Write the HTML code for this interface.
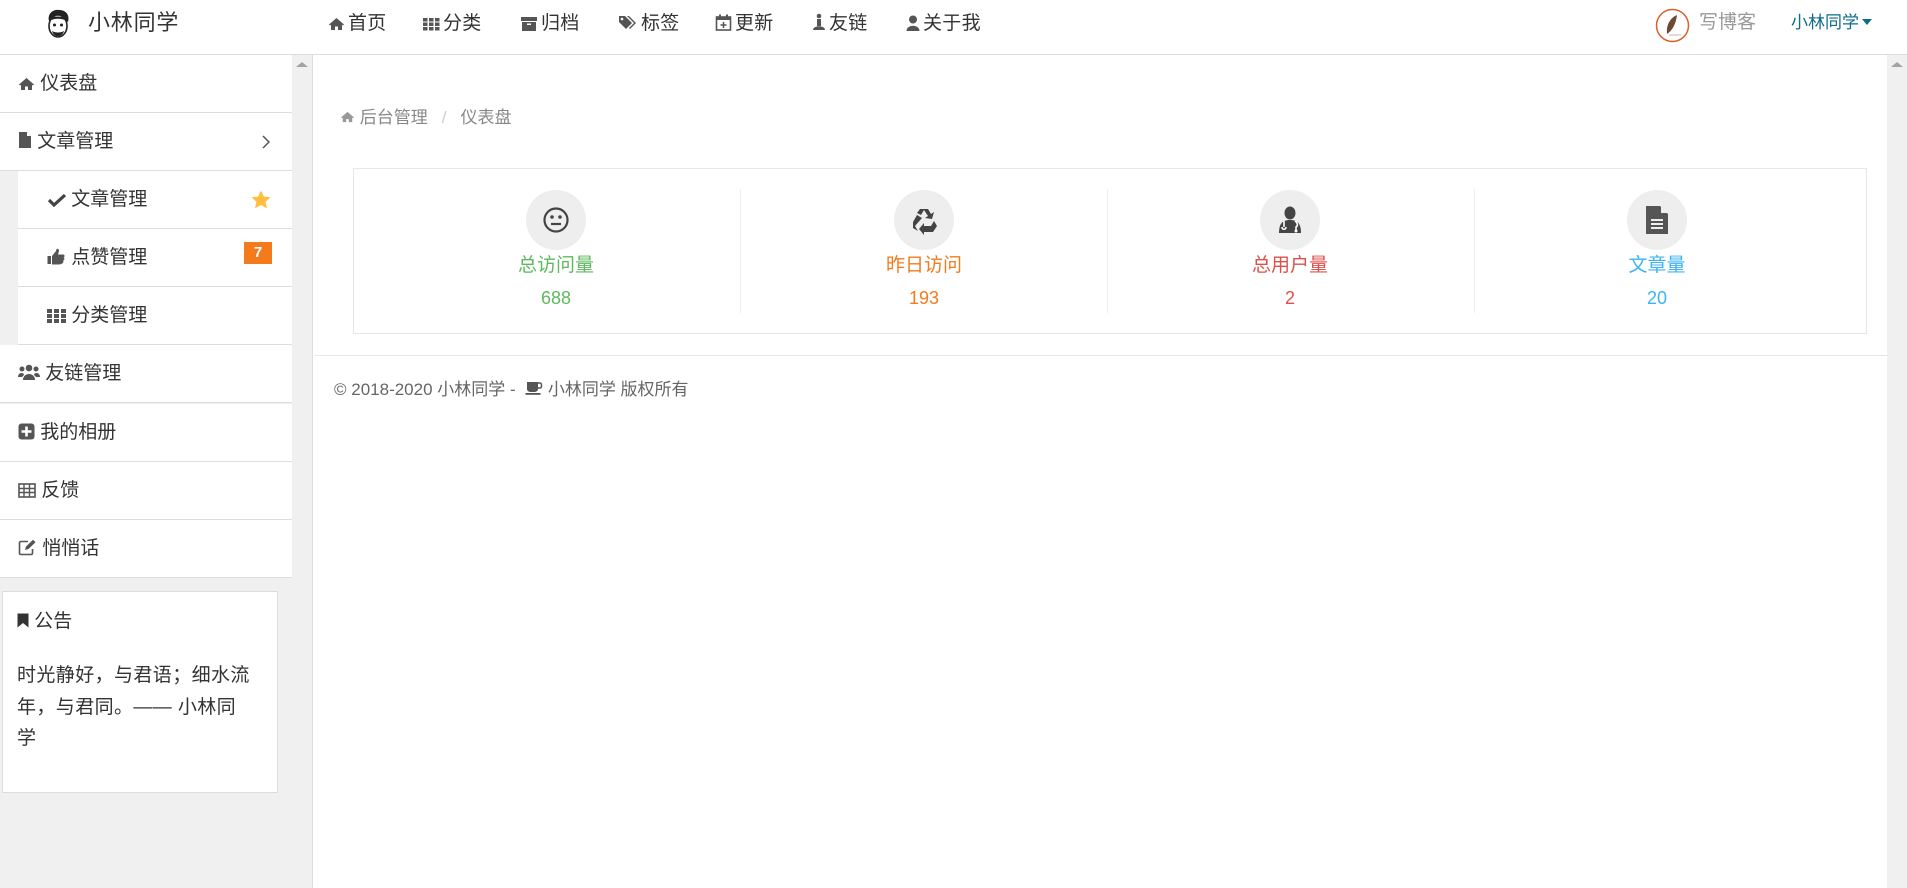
<!DOCTYPE html>
<html><head><meta charset="utf-8">
<style>
*{margin:0;padding:0;box-sizing:border-box}
body{width:1907px;height:888px;overflow:hidden;background:#fff;font-family:"Liberation Sans","Noto Sans CJK SC",sans-serif;color:#333;position:relative}
.abs{position:absolute}
.hdr{left:0;top:0;width:1907px;height:55px;border-bottom:1px solid #ddd;background:#fff}
.nav{top:1px;height:45px;line-height:45px;font-size:19px;color:#333;white-space:nowrap;letter-spacing:0.3px}
.nav svg{vertical-align:-2px;margin-right:3px}
.side{left:0;top:55px;width:292px;height:833px;background:#f0f0f0}
.item{position:absolute;left:0;width:292px;height:58px;background:#fff;border-bottom:1px solid #ddd;font-size:19px;line-height:57px;color:#333;white-space:nowrap}
.item svg{vertical-align:-2px}
.sb{left:292px;top:55px;width:21px;height:833px;background:#f0f0f0;border-right:1px solid #ddd}
.sb2{left:1887px;top:55px;width:20px;height:833px;background:#f0f0f0}
.stat{position:absolute;top:0;width:378px;text-align:center}
.circ{width:60px;height:60px;border-radius:50%;background:#eee;margin:21px auto 0;display:flex;align-items:center;justify-content:center}
.lbl{font-size:19px;margin-top:4px;line-height:24px}
.num{font-size:18px;margin-top:9px;line-height:22px}
</style></head><body>
<div class="abs hdr"></div>
<svg class="abs" style="left:44px;top:9px" width="28" height="30" viewBox="0 0 28 30">
<path d="M5 12 C3 4 10 0 15 1 C22 1 26 6 24 13 L22 12 L6 12Z" fill="#222"/>
<ellipse cx="14" cy="17" rx="9" ry="11" fill="#fff" stroke="#222" stroke-width="1.6"/>
<path d="M5 12 C6 6 22 6 23 12 C18 9 10 9 5 12Z" fill="#222"/>
<circle cx="10.5" cy="16" r="1.5" fill="#222"/><circle cx="17.5" cy="16" r="1.5" fill="#222"/>
<path d="M8 22 C10 29 18 29 20 22 C17 24 11 24 8 22Z" fill="#222"/>
</svg>
<div class="abs" style="left:88px;top:8px;font-size:22px;line-height:30px;color:#333;letter-spacing:0.8px">小林同学</div>
<div class="abs nav" style="left:328px"><svg width="17" height="14" viewBox="0 0 17 14"><path d="M8.5 1 L1 7.5 L2 8.5 L3 7.7 V13 H7 V9.5 H10 V13 H14 V7.7 L15 8.5 L16 7.5Z" fill="#555"/></svg>首页</div>
<div class="abs nav" style="left:423px"><svg width="17" height="14" viewBox="0 0 17 14"><g fill="#555"><rect x="0" y="1" width="4.5" height="3.5"/><rect x="6" y="1" width="4.5" height="3.5"/><rect x="12" y="1" width="4.5" height="3.5"/><rect x="0" y="5.5" width="4.5" height="3.5"/><rect x="6" y="5.5" width="4.5" height="3.5"/><rect x="12" y="5.5" width="4.5" height="3.5"/><rect x="0" y="10" width="4.5" height="3.5"/><rect x="6" y="10" width="4.5" height="3.5"/><rect x="12" y="10" width="4.5" height="3.5"/></g></svg>分类</div>
<div class="abs nav" style="left:520px"><svg width="18" height="15" viewBox="0 0 18 15"><rect x="1" y="1" width="16" height="4" fill="#555"/><rect x="2" y="6" width="14" height="9" fill="#555"/><rect x="7" y="7.5" width="4" height="1.5" fill="#fff"/></svg>归档</div>
<div class="abs nav" style="left:618px"><svg width="20" height="16" viewBox="0 0 20 16"><path d="M1 1 H7 L14 8 L8 14 L1 7Z" fill="#555"/><path d="M9 1 H11 L18 8 L12 14 L11 13 L16 8Z" fill="#555"/><circle cx="4" cy="4" r="1.3" fill="#fff"/></svg>标签</div>
<div class="abs nav" style="left:715px"><svg width="17" height="17" viewBox="0 0 17 17"><rect x="1.5" y="3" width="14" height="13" fill="none" stroke="#555" stroke-width="1.6"/><rect x="1.5" y="3" width="14" height="3" fill="#555"/><rect x="4" y="0.5" width="2" height="4" fill="#555"/><rect x="11" y="0.5" width="2" height="4" fill="#555"/><path d="M8.5 8 V14 M5.5 11 H11.5" stroke="#555" stroke-width="1.5"/></svg>更新</div>
<div class="abs nav" style="left:812px"><svg width="14" height="18" viewBox="0 0 14 18"><circle cx="7" cy="3" r="2.3" fill="#555"/><rect x="5" y="6" width="4" height="7" fill="#555"/><path d="M1 17 C1 12 13 12 13 17Z" fill="#555"/></svg>友链</div>
<div class="abs nav" style="left:906px"><svg width="14" height="16" viewBox="0 0 14 16"><circle cx="7" cy="4.5" r="4" fill="#555"/><path d="M0.5 16 C0.5 9 13.5 9 13.5 16Z" fill="#555"/></svg>关于我</div>
<svg class="abs" style="left:1655px;top:8px" width="35" height="35" viewBox="0 0 35 35"><circle cx="17.5" cy="17.5" r="16" fill="#fff" stroke="#d9622b" stroke-width="1.5"/><path d="M12 26 C11 17 15 10 22 7 C21 15 18 22 12 26Z" fill="#6b4a33"/><path d="M14 27 H26" stroke="#bbb" stroke-width="1"/></svg>
<div class="abs" style="left:1699px;top:9px;font-size:19px;line-height:28px;color:#999">写博客</div>
<div class="abs" style="left:1791px;top:9px;font-size:17px;line-height:28px;color:#0e6b8c">小林同学<span style="display:inline-block;width:0;height:0;border-left:5px solid transparent;border-right:5px solid transparent;border-top:6px solid #0e6b8c;margin-left:3px;vertical-align:3px"></span></div>

<div class="abs side"></div>
<div class="item" style="top:55px;padding-left:18px"><svg width="17" height="14" viewBox="0 0 17 14"><path d="M8.5 1 L1 7.5 L2 8.5 L3 7.7 V13 H7 V9.5 H10 V13 H14 V7.7 L15 8.5 L16 7.5Z" fill="#555"/></svg> 仪表盘</div>
<div class="item" style="top:113px;padding-left:18px"><svg width="14" height="18" viewBox="0 0 14 18"><path d="M1 1 H9 L13 5 V17 H1Z" fill="#555"/><path d="M9 1 V5 H13" fill="#fff"/></svg> 文章管理<svg style="position:absolute;left:262px;top:22px" width="8" height="14" viewBox="0 0 8 14"><path d="M1 1 L7 7 L1 13" fill="none" stroke="#555" stroke-width="1.5"/></svg></div>
<div class="item" style="top:171px;left:18px;width:274px;padding-left:30px"><svg width="18" height="14" viewBox="0 0 18 14"><path d="M1 7 L6 12 L17 2" fill="none" stroke="#444" stroke-width="3.2"/></svg> 文章管理<svg style="position:absolute;left:233px;top:19px" width="20" height="19" viewBox="0 0 20 19"><path d="M10 0.5 L12.9 6.6 L19.5 7.3 L14.6 11.8 L16 18.4 L10 15 L4 18.4 L5.4 11.8 L0.5 7.3 L7.1 6.6Z" fill="#ffbf3f"/></svg></div>
<div class="item" style="top:229px;left:18px;width:274px;padding-left:29px"><svg width="19" height="17" viewBox="0 0 19 17"><rect x="0.5" y="8" width="3.5" height="8" fill="#555"/><path d="M5 8 L9 3 C9 0 12 0 12 3 L11 6.5 H16 C18 6.5 18 9 16.5 9.5 C18 10 17.5 12.5 16 12.5 C17 13.5 16 15.5 15 15.5 C14 16.5 12 16.5 10 16.5 H5Z" fill="#555"/></svg> 点赞管理<span style="position:absolute;left:226px;top:13px;width:28px;height:22px;background:#f37b1d;color:#fff;font-weight:bold;font-size:15px;line-height:22px;text-align:center">7</span></div>
<div class="item" style="top:287px;left:18px;width:274px;padding-left:29px"><svg width="19" height="14" viewBox="0 0 19 14"><g fill="#555"><rect x="0" y="0" width="5" height="4"/><rect x="7" y="0" width="5" height="4"/><rect x="14" y="0" width="5" height="4"/><rect x="0" y="5" width="5" height="4"/><rect x="7" y="5" width="5" height="4"/><rect x="14" y="5" width="5" height="4"/><rect x="0" y="10" width="5" height="4"/><rect x="7" y="10" width="5" height="4"/><rect x="14" y="10" width="5" height="4"/></g></svg> 分类管理</div>
<div class="item" style="top:345px;padding-left:18px"><svg width="22" height="17" viewBox="0 0 22 17"><g fill="#555"><circle cx="11" cy="4" r="3.3"/><circle cx="4" cy="5" r="2.5"/><circle cx="18" cy="5" r="2.5"/><path d="M5 16 C5 8 17 8 17 16Z"/><path d="M0 13 C0 8 6 8 6 11 L4 13Z"/><path d="M22 13 C22 8 16 8 16 11 L18 13Z"/></g></svg> 友链管理</div>
<div class="item" style="top:404px;padding-left:18px"><svg width="17" height="17" viewBox="0 0 17 17"><rect x="0.5" y="0.5" width="16" height="16" rx="3" fill="#555"/><path d="M8.5 3.5 V13.5 M3.5 8.5 H13.5" stroke="#fff" stroke-width="2.6"/></svg> 我的相册</div>
<div class="item" style="top:462px;padding-left:18px"><svg width="18" height="15" viewBox="0 0 18 15"><rect x="1" y="1" width="16" height="13" fill="none" stroke="#555" stroke-width="1.6"/><path d="M1 5.5 H17 M1 9.5 H17 M6 1 V14 M11.5 1 V14" stroke="#555" stroke-width="1.4"/></svg> 反馈</div>
<div class="item" style="top:520px;padding-left:18px"><svg width="19" height="17" viewBox="0 0 19 17"><path d="M10 2.5 H3 C2 2.5 1.5 3 1.5 4 V14 C1.5 15 2 15.5 3 15.5 H13 C14 15.5 14.5 15 14.5 14 V10" fill="none" stroke="#555" stroke-width="1.6"/><path d="M7 11 L8 7.5 L15 0.8 L17.5 3.3 L10.5 10Z" fill="#555"/></svg> 悄悄话</div>
<div class="abs" style="left:2px;top:591px;width:276px;height:202px;background:#fff;border:1px solid #ddd"></div>
<div class="abs" style="left:17px;top:609px;font-size:19px;line-height:26px;color:#333"><svg width="12" height="15" viewBox="0 0 12 15" style="vertical-align:-1px"><path d="M0.5 0.5 H11.5 V14.5 L6 10 L0.5 14.5Z" fill="#333"/></svg> 公告</div>
<div class="abs" style="left:17px;top:660px;font-size:19px;line-height:31.5px;color:#333;letter-spacing:0.4px;white-space:nowrap">时光静好，与君语；细水流<br>年，与君同。—— 小林同<br>学</div>
<div class="abs sb"></div>
<div class="abs" style="left:296px;top:62px;width:0;height:0;border-left:6px solid transparent;border-right:6px solid transparent;border-bottom:5px solid #a3a3a3"></div>
<div class="abs sb2"></div>
<div class="abs" style="left:1891px;top:62px;width:0;height:0;border-left:6px solid transparent;border-right:6px solid transparent;border-bottom:5px solid #a3a3a3"></div>

<div class="abs" style="left:340px;top:106px;font-size:17px;line-height:24px;color:#888;white-space:nowrap"><svg width="15" height="12" viewBox="0 0 17 14"><path d="M8.5 1 L1 7.5 L2 8.5 L3 7.7 V13 H7 V9.5 H10 V13 H14 V7.7 L15 8.5 L16 7.5Z" fill="#999"/></svg> 后台管理<span style="color:#ccc;margin:0 14px 0 14px">/</span>仪表盘</div>

<div class="abs" style="left:353px;top:168px;width:1514px;height:166px;border:1px solid #e6e6e6">
 <div class="abs" style="left:386px;top:20px;width:1px;height:124px;background:#eee"></div>
 <div class="abs" style="left:753px;top:20px;width:1px;height:124px;background:#eee"></div>
 <div class="abs" style="left:1120px;top:20px;width:1px;height:124px;background:#eee"></div>
 <div class="stat" style="left:13px;color:#5eb95e"><div class="circ"><svg width="28" height="28" viewBox="0 0 28 28"><circle cx="14" cy="14" r="11.5" fill="none" stroke="#444" stroke-width="2.2"/><circle cx="10" cy="11" r="1.8" fill="#444"/><circle cx="18" cy="11" r="1.8" fill="#444"/><path d="M9 18 H19" stroke="#444" stroke-width="2.2"/></svg></div><div class="lbl">总访问量</div><div class="num">688</div></div>
 <div class="stat" style="left:381px;color:#f37b1d"><div class="circ"><svg width="30" height="30" viewBox="0 0 30 30"><g fill="#444"><path d="M11 4 L19 4 L22 9 L25 7 L23 14 L16 13 L19 11 L15 5 L12 10 L8 8Z"/><path d="M4 17 L8 10 L13 13 L6 21 L9 26 L4 23Z"/><path d="M15 21 L22 21 L25 16 L28 21 L24 27 L15 27 L15 30 L10 24 L15 18Z"/></g></svg></div><div class="lbl">昨日访问</div><div class="num">193</div></div>
 <div class="stat" style="left:747px;color:#dd514c"><div class="circ"><svg width="24" height="28" viewBox="0 0 24 28"><ellipse cx="12" cy="7" rx="5.5" ry="6.5" fill="#444"/><path d="M1 27 C1 17 5 14 12 14 C19 14 23 17 23 27Z" fill="#444"/><path d="M6 15 V21 M4 21 C4 24 8 24 8 21 M17 15 C20 17 20 20 18 21 V25" fill="none" stroke="#fff" stroke-width="1.6"/><circle cx="18" cy="25" r="1.5" fill="#fff"/></svg></div><div class="lbl">总用户量</div><div class="num">2</div></div>
 <div class="stat" style="left:1114px;color:#3bb4f2"><div class="circ"><svg width="24" height="30" viewBox="0 0 24 30"><path d="M1 1 H15 L23 9 V29 H1Z" fill="#555"/><path d="M16 1 V8 H23" fill="#eee"/><path d="M6 15 H18 M6 19 H18 M6 23 H18" stroke="#eee" stroke-width="2"/></svg></div><div class="lbl">文章量</div><div class="num">20</div></div>
</div>
<div class="abs" style="left:314px;top:355px;width:1573px;height:1px;background:#e6e6e6"></div>
<div class="abs" style="left:334px;top:378px;font-size:17px;line-height:24px;color:#666;white-space:nowrap">© 2018-2020 小林同学 - &nbsp;<svg width="18" height="14" viewBox="0 0 18 14"><path d="M2 1 H13 V8 C13 10 11 11 9 11 H6 C4 11 2 10 2 8Z" fill="#555"/><path d="M13 2 H15 C17 2 17 7 15 7 H13" fill="none" stroke="#555" stroke-width="1.5"/><rect x="0.5" y="12" width="15" height="1.8" fill="#555"/></svg> 小林同学 版权所有</div>
</body></html>
